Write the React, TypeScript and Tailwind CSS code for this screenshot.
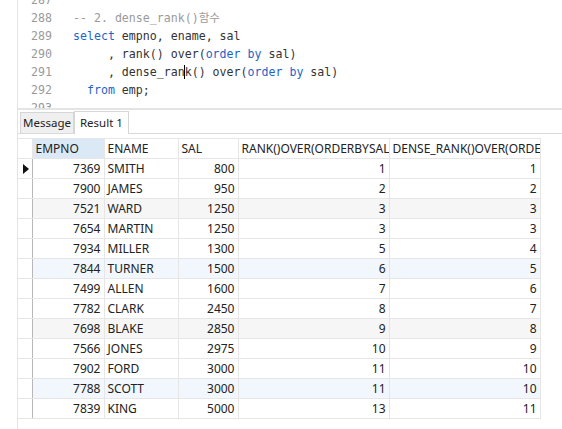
import React from "react";

const rows = [
  [7369, "SMITH", 800, 1, 1],
  [7900, "JAMES", 950, 2, 2],
  [7521, "WARD", 1250, 3, 3],
  [7654, "MARTIN", 1250, 3, 3],
  [7934, "MILLER", 1300, 5, 4],
  [7844, "TURNER", 1500, 6, 5],
  [7499, "ALLEN", 1600, 7, 6],
  [7782, "CLARK", 2450, 8, 7],
  [7698, "BLAKE", 2850, 9, 8],
  [7566, "JONES", 2975, 10, 9],
  [7902, "FORD", 3000, 11, 10],
  [7788, "SCOTT", 3000, 11, 10],
  [7839, "KING", 5000, 13, 11],
] as const;

const rowBg = (i: number) => {
  if (i === 5 || i === 11) return "bg-[#f1f7fd]";
  if (i === 2 || i === 8) return "bg-[#f6f6f6]";
  return "bg-white";
};

const kw = "text-[#1f63c6]";

export default function App() {
  return (
    <div className="w-[562px] h-[429px] overflow-hidden bg-white flex">
      <div className="w-[17px] shrink-0 bg-white" />
      <div className="flex-1 flex flex-col border-l border-[#e3e3e3]">
        {/* editor */}
        <div
          className="h-[108px] overflow-hidden flex text-[11.6px] leading-[18px] text-[#333]"
          style={{ fontFamily: '"DejaVu Sans Mono", "Noto Sans CJK KR", monospace' }}
        >
          <div className="-mt-[9px] w-[34px] text-right text-[#9a9a9a]">
            {[287, 288, 289, 290, 291, 292, 293].map((n) => (
              <div key={n}>{n}</div>
            ))}
          </div>
          <div className="-mt-[9px] ml-[21px] whitespace-pre">
            <div> </div>
            <div className="text-[#9a9a9a]">-- 2. dense_rank()함수</div>
            <div>
              <span className={kw}>select</span> empno, ename, sal
            </div>
            <div>
              {"     , rank() over("}
              <span className={kw}>order by</span> sal)
            </div>
            <div>
              {"     , dense_ran"}
              <span className="border-l border-black -ml-px" />
              {"k() over("}
              <span className={kw}>order by</span> sal)
            </div>
            <div>
              {"  "}
              <span className={kw}>from</span> emp;
            </div>
            <div> </div>
          </div>
        </div>
        <div className="h-[2px] bg-[#e4e4e4]" />

        {/* tabs */}
        <div
          className="flex items-end h-[24px] border-b border-[#d9d9d9] pl-[2px] text-[11.5px] text-[#222]"
          style={{ fontFamily: '"Noto Sans", sans-serif' }}
        >
          <div className="h-[21px] px-[2px] flex items-center bg-[#efefef] border border-b-0 border-[#d6d6d6]">
            Message
          </div>
          <div className="h-[23px] px-[5px] -mb-px flex items-center bg-white border border-b-0 border-[#d6d6d6]">
            Result 1
          </div>
        </div>

        {/* grid */}
        <div className="pt-[4px]">
          <table
            className="w-[522px] border-collapse table-fixed text-[12px] text-[#222]"
            style={{ fontFamily: '"Noto Sans", sans-serif' }}
          >
            <colgroup>
              <col className="w-[14px]" />
              <col className="w-[72px]" />
              <col className="w-[74px]" />
              <col className="w-[60px]" />
              <col className="w-[151px]" />
              <col className="w-[151px]" />
            </colgroup>
            <thead>
              <tr className="h-[20px]">
                <th className="border border-[#e6e6e6] border-l-0 bg-white" />
                {[
                  "EMPNO",
                  "ENAME",
                  "SAL",
                  "RANK()OVER(ORDERBYSAL)",
                  "DENSE_RANK()OVER(ORDERBYSAL)",
                ].map((h, i) => (
                  <th
                    key={h}
                    className={`border border-[#e6e6e6] px-[3px] text-left font-normal whitespace-nowrap overflow-hidden ${
                      i === 0 ? "bg-[#dbe8f6]" : "bg-white"
                    }`}
                  >
                    {h}
                  </th>
                ))}
              </tr>
            </thead>
            <tbody>
              {rows.map((r, i) => (
                <tr key={r[0]} className={`h-[20px] ${rowBg(i)}`}>
                  <td className="border border-[#e6e6e6] border-l-0 border-r-[#b8b8b8] bg-white p-0">
                    {i === 0 && (
                      <svg width="12" height="12" viewBox="0 0 12 12" className="ml-[3px]">
                        <path d="M2 1 L8 6 L2 11 Z" fill="#111" />
                      </svg>
                    )}
                  </td>
                  <td className="border border-[#e6e6e6] px-[3px] text-right">{r[0]}</td>
                  <td className="border border-[#e6e6e6] px-[3px] text-left">{r[1]}</td>
                  <td className="border border-[#e6e6e6] px-[3px] text-right">{r[2]}</td>
                  <td className="border border-[#e6e6e6] px-[3px] text-right">{r[3]}</td>
                  <td className="border border-[#e6e6e6] px-[3px] text-right">{r[4]}</td>
                </tr>
              ))}
            </tbody>
          </table>
        </div>
      </div>
    </div>
  );
}
